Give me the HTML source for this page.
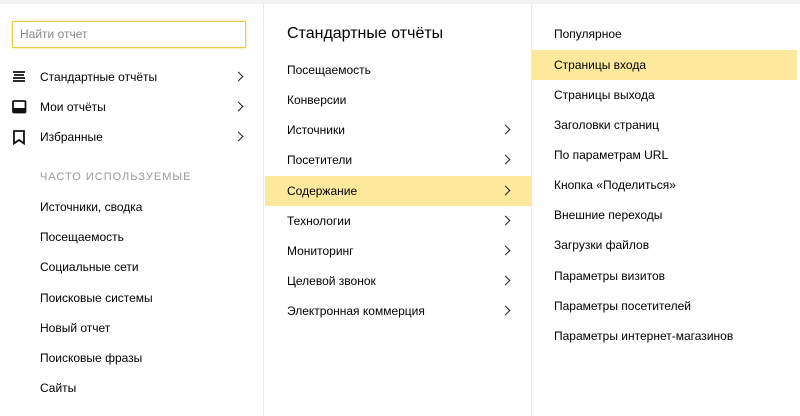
<!DOCTYPE html>
<html><head><meta charset="utf-8"><style>
*{margin:0;padding:0;box-sizing:border-box}
body{width:800px;height:416px;overflow:hidden;background:#fff;font-family:"Liberation Sans",Arial,sans-serif;font-size:12px;color:#000;position:relative}
.top{position:absolute;left:0;top:0;width:800px;height:4px;background:#f2f2f2}
.col{position:absolute;top:4px;bottom:0}
.c1{left:0;width:264px;border-right:1px solid #e8e8e8}
.c2{left:265px;width:267px;border-right:1px solid #e8e8e8}
.c3{left:532px;width:265px}
.row{position:absolute;left:0;right:0;height:30px;line-height:31px}
.hl{background:#fde89c}
.arr{position:absolute;width:7px;height:7px;border-top:1.2px solid #222;border-right:1.2px solid #222;transform:rotate(45deg)}
.search{position:absolute;left:12px;top:17px;width:234px;height:27px;border:1px solid #f0c94a;box-shadow:0 0 3px #f5d97a;font-size:12px;color:#888;padding-left:7px;line-height:25px}
</style></head><body>
<div class="top"></div>
<div class="col c1">
<div class="search">Найти отчет</div>
<div class="row" style="top:58px"><svg style="position:absolute;left:12px;top:9px" width="14" height="12"><path d="M1 1h12M2 4h10M1 7h12M1 10h12" stroke="#111" stroke-width="1.8"/></svg><span style="position:absolute;left:40px">Стандартные отчёты</span><i class="arr" style="left:235px;top:11px"></i></div>
<div class="row" style="top:88px"><svg style="position:absolute;left:12px;top:8px" width="15" height="14"><rect x="1" y="1" width="12.5" height="11.5" rx="1" fill="none" stroke="#111" stroke-width="1.8"/><rect x="1" y="8" width="12.5" height="4.5" fill="#111"/></svg><span style="position:absolute;left:40px">Мои отчёты</span><i class="arr" style="left:235px;top:11px"></i></div>
<div class="row" style="top:118px"><svg style="position:absolute;left:13px;top:8px" width="12" height="15"><path d="M1 1h10v12.5L6 10l-5 3.5z" fill="none" stroke="#111" stroke-width="1.8"/></svg><span style="position:absolute;left:40px">Избранные</span><i class="arr" style="left:235px;top:11px"></i></div>
<div class="row" style="top:158px;left:40px;color:#999;letter-spacing:1px;font-size:11px">ЧАСТО ИСПОЛЬЗУЕМЫЕ</div>
<div class="row" style="top:188px;padding-left:40px">Источники, сводка</div>
<div class="row" style="top:218px;padding-left:40px">Посещаемость</div>
<div class="row" style="top:248px;padding-left:40px">Социальные сети</div>
<div class="row" style="top:279px;padding-left:40px">Поисковые системы</div>
<div class="row" style="top:309px;padding-left:40px">Новый отчет</div>
<div class="row" style="top:339px;padding-left:40px">Поисковые фразы</div>
<div class="row" style="top:369px;padding-left:40px">Сайты</div>
</div>
<div class="col c2">
<div style="position:absolute;left:22px;top:21px;font-size:16px">Стандартные отчёты</div>
<div class="row" style="top:51px;padding-left:22px">Посещаемость</div>
<div class="row" style="top:81px;padding-left:22px">Конверсии</div>
<div class="row" style="top:111px;padding-left:22px">Источники<i class="arr" style="left:237px;top:11px"></i></div>
<div class="row" style="top:141px;padding-left:22px">Посетители<i class="arr" style="left:237px;top:11px"></i></div>
<div class="row hl" style="top:172px;padding-left:22px">Содержание<i class="arr" style="left:237px;top:11px"></i></div>
<div class="row" style="top:202px;padding-left:22px">Технологии<i class="arr" style="left:237px;top:11px"></i></div>
<div class="row" style="top:232px;padding-left:22px">Мониторинг<i class="arr" style="left:237px;top:11px"></i></div>
<div class="row" style="top:262px;padding-left:22px">Целевой звонок<i class="arr" style="left:237px;top:11px"></i></div>
<div class="row" style="top:292px;padding-left:22px">Электронная коммерция<i class="arr" style="left:237px;top:11px"></i></div>
</div>
<div class="col c3">
<div class="row" style="top:15px;padding-left:22px">Популярное</div>
<div class="row hl" style="top:46px;padding-left:22px">Страницы входа</div>
<div class="row" style="top:76px;padding-left:22px">Страницы выхода</div>
<div class="row" style="top:106px;padding-left:22px">Заголовки страниц</div>
<div class="row" style="top:136px;padding-left:22px">По параметрам URL</div>
<div class="row" style="top:166px;padding-left:22px">Кнопка «Поделиться»</div>
<div class="row" style="top:196px;padding-left:22px">Внешние переходы</div>
<div class="row" style="top:226px;padding-left:22px">Загрузки файлов</div>
<div class="row" style="top:257px;padding-left:22px">Параметры визитов</div>
<div class="row" style="top:287px;padding-left:22px">Параметры посетителей</div>
<div class="row" style="top:317px;padding-left:22px">Параметры интернет-магазинов</div>
</div>
</body></html>
